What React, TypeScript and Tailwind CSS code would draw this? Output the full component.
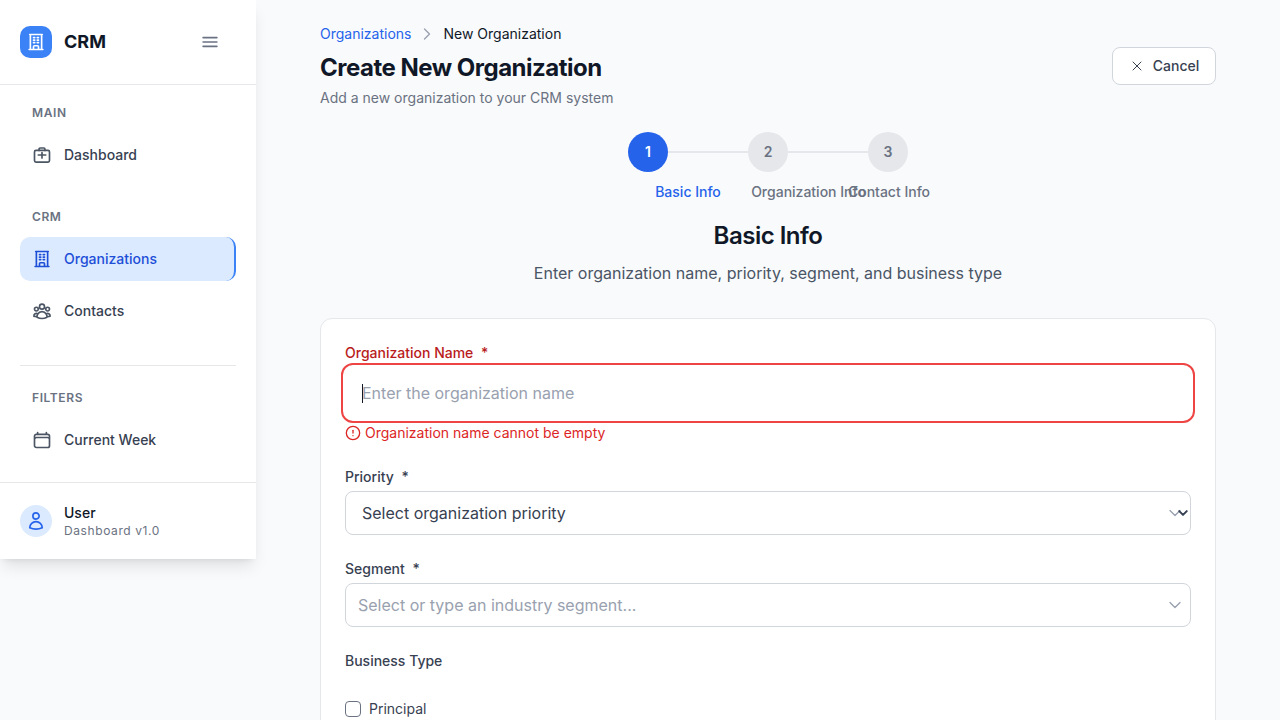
import React from "react";
import { CircleAlert } from "lucide-react";
import {
  HiOutlineBars3,
  HiOutlineBuildingOffice,
  HiOutlineCalendar,
  HiOutlineChevronDown,
  HiOutlineChevronRight,
  HiOutlineUser,
  HiOutlineUserGroup,
  HiOutlineXMark,
} from "react-icons/hi2";

function DashIcon() {
  return (
    <svg viewBox="0 0 24 24" className="w-5 h-5 text-[#4b5563]" fill="none" stroke="currentColor" strokeWidth={2} strokeLinecap="round" strokeLinejoin="round">
      <path d="M8.5 6.5V4.8c0-.7.5-1.2 1.2-1.2h4.6c.7 0 1.2.5 1.2 1.2v1.7" />
      <rect x="3" y="6.5" width="18" height="14" rx="1.8" />
      <path d="M12 9v6.5M7.5 12h9" />
    </svg>
  );
}

function NavItem({ icon, label, active }: { icon: React.ReactNode; label: string; active?: boolean }) {
  return (
    <div
      className={
        active
          ? "h-11 flex items-center gap-3 px-3 rounded-[10px] bg-[#dbeafe] border-r-2 border-[#3b82f6] text-[#1d4ed8] text-sm font-medium"
          : "h-11 flex items-center gap-3 px-3 rounded-[10px] text-[#374151] text-sm font-medium"
      }
    >
      {icon}
      <span>{label}</span>
    </div>
  );
}

function SectionLabel({ children }: { children: React.ReactNode }) {
  return <div className="px-3 h-4 leading-4 text-xs font-semibold tracking-wider text-gray-500 mb-3">{children}</div>;
}

function Sidebar() {
  return (
    <aside className="w-64 h-[559px] shrink-0 bg-white shadow-lg flex flex-col">
      <div className="h-[85px] shrink-0 border-b border-gray-200 px-5 flex items-center justify-between">
        <div className="flex items-center gap-3">
          <div className="w-8 h-8 rounded-[10px] bg-[#3b82f6] flex items-center justify-center text-white">
            <HiOutlineBuildingOffice className="w-5 h-5 stroke-2" />
          </div>
          <span className="text-lg font-bold text-gray-900">CRM</span>
        </div>
        <div className="w-8 h-8 mr-[10px] flex items-center justify-center text-gray-500">
          <HiOutlineBars3 className="w-5 h-5 stroke-2" />
        </div>
      </div>
      <nav className="px-5 pt-5">
        <SectionLabel>MAIN</SectionLabel>
        <NavItem icon={<DashIcon />} label="Dashboard" />
        <div className="mt-8">
          <SectionLabel>CRM</SectionLabel>
          <NavItem active icon={<HiOutlineBuildingOffice className="w-5 h-5 stroke-2" />} label="Organizations" />
          <div className="mt-2">
            <NavItem icon={<HiOutlineUserGroup className="w-5 h-5 text-[#4b5563] stroke-2" />} label="Contacts" />
          </div>
        </div>
        <div className="mt-8 mb-6 border-t border-gray-200" />
        <SectionLabel>FILTERS</SectionLabel>
        <NavItem icon={<HiOutlineCalendar className="w-5 h-5 text-[#4b5563] stroke-2" />} label="Current Week" />
      </nav>
      <div className="mt-5 border-t border-gray-200 px-5 flex-1 flex items-center gap-3">
        <div className="w-8 h-8 rounded-full bg-[#dbeafe] flex items-center justify-center text-[#2563eb]">
          <HiOutlineUser className="w-5 h-5 stroke-2" />
        </div>
        <div>
          <div className="text-sm leading-5 font-medium text-gray-900">User</div>
          <div className="text-xs leading-4 text-gray-500 tracking-wider">Dashboard v1.0</div>
        </div>
      </div>
    </aside>
  );
}

function Stepper() {
  return (
    <div className="mt-[24px]">
      <div className="flex items-center justify-center">
        <div className="w-10 h-10 rounded-full bg-[#2563eb] text-white text-sm font-semibold flex items-center justify-center">1</div>
        <div className="w-20 h-0.5 bg-gray-200" />
        <div className="w-10 h-10 rounded-full bg-gray-200 text-gray-500 text-sm font-semibold flex items-center justify-center">2</div>
        <div className="w-20 h-0.5 bg-gray-200" />
        <div className="w-10 h-10 rounded-full bg-gray-200 text-gray-500 text-sm font-semibold flex items-center justify-center">3</div>
      </div>
      <div className="flex mt-[10px] h-5 pl-[328px] text-sm font-medium leading-5 whitespace-nowrap">
        <div className="w-20 flex justify-center text-[#2563eb]">Basic Info</div>
        <div className="ml-10 w-[81px] flex justify-center text-gray-500">Organization Info</div>
        <div className="w-20 flex justify-center text-gray-500">Contact Info</div>
      </div>
    </div>
  );
}

function FieldLabel({ children, error }: { children: React.ReactNode; error?: boolean }) {
  return (
    <div className={error ? "h-5 text-sm leading-5 font-medium text-[#b91c1c]" : "h-5 text-sm leading-5 font-medium text-[#374151]"}>
      {children}
    </div>
  );
}

function Form() {
  return (
    <div className="mt-[33px] bg-white border border-gray-200 rounded-xl px-6 pt-6 pb-6">
      <FieldLabel error>
        Organization Name <span className="ml-1">*</span>
      </FieldLabel>
      <div className="relative -mx-1 h-[60px] rounded-xl border-2 border-[#ef4444] flex items-center pl-[19px] pr-4">
        <input
          readOnly
          placeholder="Enter the organization name"
          className="w-full bg-transparent outline-none text-base text-gray-900 placeholder:text-gray-400"
        />
        <span className="absolute left-[19px] top-[19px] w-px h-[19px] bg-gray-900" />
      </div>
      <div className="h-5 flex items-center gap-1 text-sm text-[#dc2626]">
        <CircleAlert className="w-4 h-4" />
        <span>Organization name cannot be empty</span>
      </div>
      <div className="mt-[24px]">
        <FieldLabel>
          Priority <span className="ml-1">*</span>
        </FieldLabel>
      </div>
      <div className="mt-1 h-11 rounded-lg border border-gray-300 flex items-center pl-4 text-base text-[#374151]">
        <span className="flex-1">Select organization priority</span>
        <div className="relative w-5 h-4">
          <HiOutlineChevronDown className="absolute left-[-3px] top-0 w-4 h-4 text-gray-400 stroke-2" />
          <HiOutlineChevronDown className="absolute left-[7px] top-[2px] w-3 h-3 text-gray-700 stroke-[4]" />
        </div>
      </div>
      <div className="mt-6">
        <FieldLabel>
          Segment <span className="ml-1">*</span>
        </FieldLabel>
      </div>
      <div className="mt-1 h-11 rounded-lg border border-gray-300 flex items-center pl-3 pr-[7px] text-base text-gray-400">
        <span className="flex-1">Select or type an industry segment...</span>
        <HiOutlineChevronDown className="w-4 h-4 text-gray-400 stroke-2" />
      </div>
      <div className="mt-6">
        <FieldLabel>Business Type</FieldLabel>
      </div>
      <label className="mt-[28px] flex items-center gap-2 text-sm text-[#374151] h-5">
        <span className="w-4 h-4 rounded border border-gray-500 bg-white" />
        Principal
      </label>
    </div>
  );
}

export default function App() {
  return (
    <div className="h-screen overflow-hidden bg-[#f9fafb] flex items-start font-['Inter',sans-serif]">
      <Sidebar />
      <main className="flex-1 min-w-0 pl-16 pr-16 pt-6">
        <div className="flex items-center h-5 text-sm">
          <span className="text-[#2563eb]">Organizations</span>
          <HiOutlineChevronRight className="w-4 h-4 ml-2 text-gray-400 stroke-2" />
          <span className="ml-2 text-gray-900">New Organization</span>
        </div>
        <div className="flex justify-between items-start">
          <div>
            <h1 className="mt-[8px] text-2xl leading-8 font-bold text-gray-900 tracking-[-0.5px]">Create New Organization</h1>
            <p className="mt-[4px] text-sm leading-5 text-gray-500">Add a new organization to your CRM system</p>
          </div>
          <button className="mt-[3px] w-[104px] h-[38px] bg-white border border-gray-300 rounded-lg flex items-center justify-center gap-2 text-sm font-medium text-[#374151]">
            <HiOutlineXMark className="w-4 h-4" />
            Cancel
          </button>
        </div>
        <Stepper />
        <div className="text-center mt-[18px]">
          <h2 className="text-2xl leading-8 font-semibold text-gray-900 tracking-[-0.5px]">Basic Info</h2>
          <p className="mt-[9px] text-base leading-6 text-gray-600">Enter organization name, priority, segment, and business type</p>
        </div>
        <Form />
      </main>
    </div>
  );
}
